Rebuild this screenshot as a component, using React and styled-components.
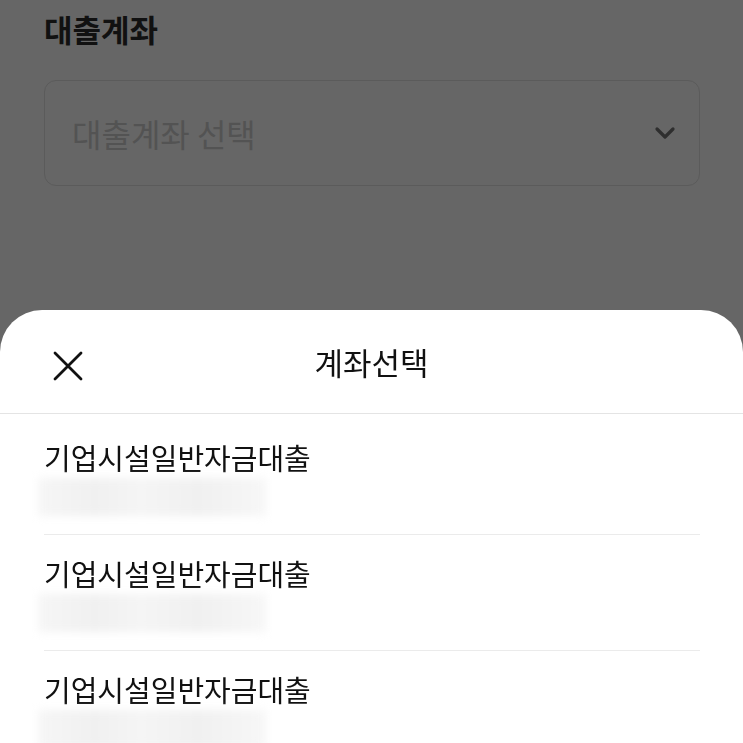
import React from "react";
import styled, { createGlobalStyle } from "styled-components";

const GlobalStyle = createGlobalStyle`
  html, body {
    margin: 0;
    padding: 0;
    background: #666666;
    height: 743px;
    overflow: hidden;
  }
  body {
    font-family: "Noto Sans CJK KR", "Noto Sans", sans-serif;
  }
`;

const Page = styled.div`
  padding: 13px 43px 0 44px;
`;

const Label = styled.div`
  font-size: 31px;
  line-height: 1;
  font-weight: 700;
  color: #111;
`;

const SelectBox = styled.div`
  margin-top: 36px;
  height: 104px;
  border: 1px solid #5b5b5b;
  border-radius: 12px;
  display: flex;
  align-items: center;
  justify-content: space-between;
  padding: 0 23px 0 27px;
`;

const Placeholder = styled.span`
  font-size: 32px;
  line-height: 1;
  color: #535353;
`;

const Sheet = styled.div`
  position: fixed;
  left: 0;
  right: 0;
  top: 310px;
  bottom: 0;
  background: #fff;
  border-radius: 42px 42px 0 0;
  display: flex;
  flex-direction: column;
  overflow: hidden;
`;

const SheetHeader = styled.div`
  flex-shrink: 0;
  height: 103px;
  border-bottom: 1px solid #e4e4e4;
  display: flex;
  align-items: center;
  justify-content: center;
  position: relative;
`;

const CloseButton = styled.button`
  position: absolute;
  left: 50px;
  top: 38px;
  width: 36px;
  height: 36px;
  padding: 0;
  border: 0;
  background: none;
  display: flex;
  align-items: center;
  justify-content: center;
`;

const SheetTitle = styled.h2`
  margin: 0;
  font-size: 31px;
  line-height: 1;
  font-weight: 400;
  color: #111;
`;

const List = styled.ul`
  flex-shrink: 0;
  list-style: none;
  margin: 0;
  padding: 5px 43px 0 44px;
`;

const Item = styled.li`
  padding: 24px 0 18px;
  border-bottom: ${(p) => (p.$last ? "0" : "1px solid #ebebeb")};
`;

const ItemName = styled.div`
  font-size: 29px;
  line-height: 1;
  color: #111;
`;

const Masked = styled.div`
  margin: 6px 0 0 -6px;
  width: 228px;
  height: 38px;
  background: linear-gradient(
    90deg,
    #f6f6f6 0%,
    #f0f0f0 25%,
    #f5f5f5 45%,
    #f0f0f0 70%,
    #f7f7f7 100%
  );
  filter: blur(4px);
`;

const Chevron = () => (
  <svg width="22" height="14" viewBox="0 0 22 14">
    <path
      d="M3 3l8 8 8-8"
      fill="none"
      stroke="#2e2e2e"
      strokeWidth="3.2"
      strokeLinecap="round"
      strokeLinejoin="round"
    />
  </svg>
);

const CloseIcon = () => (
  <svg width="32" height="32" viewBox="0 0 32 32">
    <path
      d="M3 3l26 26M29 3L3 29"
      fill="none"
      stroke="#111"
      strokeWidth="2.8"
      strokeLinecap="round"
    />
  </svg>
);

const accounts = ["기업시설일반자금대출", "기업시설일반자금대출", "기업시설일반자금대출"];

export default function App() {
  return (
    <>
      <GlobalStyle />
      <Page>
        <Label>대출계좌</Label>
        <SelectBox>
          <Placeholder>대출계좌 선택</Placeholder>
          <Chevron />
        </SelectBox>
      </Page>
      <Sheet>
        <SheetHeader>
          <CloseButton aria-label="닫기">
            <CloseIcon />
          </CloseButton>
          <SheetTitle>계좌선택</SheetTitle>
        </SheetHeader>
        <List>
          {accounts.map((name, i) => (
            <Item key={i} $last={i === accounts.length - 1}>
              <ItemName>{name}</ItemName>
              <Masked />
            </Item>
          ))}
        </List>
      </Sheet>
    </>
  );
}
